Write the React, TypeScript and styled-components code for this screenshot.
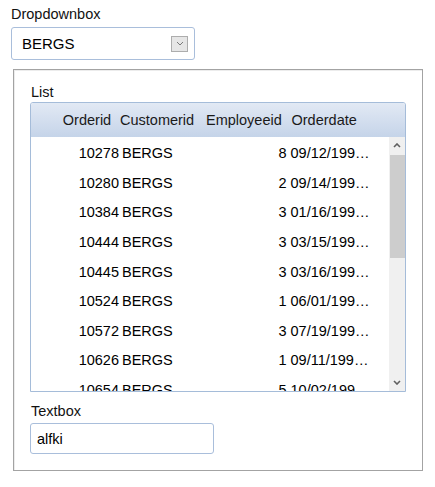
import { FC } from "react";
import styled, { createGlobalStyle } from "styled-components";

const GlobalStyle = createGlobalStyle`
  html, body {
    margin: 0;
    padding: 0;
    background: #ffffff;
  }
  body {
    font-family: "Liberation Sans", Arial, sans-serif;
    font-size: 14.5px;
    line-height: 17px;
    color: #000000;
  }
`;

interface Order {
  id: number;
  customer: string;
  employee: number;
  date: string;
}

const orders: Order[] = [
  { id: 10278, customer: "BERGS", employee: 8, date: "09/12/1996 12:00:00 AM" },
  { id: 10280, customer: "BERGS", employee: 2, date: "09/14/1996 12:00:00 AM" },
  { id: 10384, customer: "BERGS", employee: 3, date: "01/16/1997 12:00:00 AM" },
  { id: 10444, customer: "BERGS", employee: 3, date: "03/15/1997 12:00:00 AM" },
  { id: 10445, customer: "BERGS", employee: 3, date: "03/16/1997 12:00:00 AM" },
  { id: 10524, customer: "BERGS", employee: 1, date: "06/01/1997 12:00:00 AM" },
  { id: 10572, customer: "BERGS", employee: 3, date: "07/19/1997 12:00:00 AM" },
  { id: 10626, customer: "BERGS", employee: 1, date: "09/11/1997 12:00:00 AM" },
  { id: 10654, customer: "BERGS", employee: 5, date: "10/02/1997 12:00:00 AM" },
  { id: 10672, customer: "BERGS", employee: 9, date: "10/20/1997 12:00:00 AM" },
  { id: 10689, customer: "BERGS", employee: 1, date: "11/01/1997 12:00:00 AM" },
];

const Chevron: FC<{ up?: boolean; color?: string; weight?: number }> = ({
  up,
  color = "#606060",
  weight = 1.6,
}) => (
  <svg width={8} height={5} viewBox="0 0 8 5">
    <polyline
      points={up ? "1,4 4,1 7,4" : "1,1 4,4 7,1"}
      fill="none"
      stroke={color}
      strokeWidth={weight}
    />
  </svg>
);

const App: FC = () => {
  return (
    <>
      <GlobalStyle />
      <Page>
        <FieldLabel>Dropdownbox</FieldLabel>
        <Dropdown>
          <span>BERGS</span>
          <DropButton>
            <Chevron color="#7a7a7a" weight={1} />
          </DropButton>
        </Dropdown>

        <Panel>
          <FieldLabel $indent={1}>List</FieldLabel>
          <ListBox>
            <ListHeader>
              <span />
              <HeadCell $align="center">Orderid</HeadCell>
              <HeadCell $indent={1}>Customerid</HeadCell>
              <HeadCell $indent={5}>Employeeid</HeadCell>
              <HeadCell $indent={5}>Orderdate</HeadCell>
            </ListHeader>
            <ListBody>
              <Rows>
                {orders.map((o) => (
                  <Row key={o.id}>
                    <span />
                    <Cell $align="right">{o.id}</Cell>
                    <Cell $indent={3}>{o.customer}</Cell>
                    <Cell $align="right">{o.employee}</Cell>
                    <Cell $indent={4}>{o.date}</Cell>
                  </Row>
                ))}
              </Rows>
              <ScrollBar>
                <ScrollButton>
                  <Chevron up />
                </ScrollButton>
                <ScrollTrack>
                  <ScrollThumb />
                </ScrollTrack>
                <ScrollButton>
                  <Chevron />
                </ScrollButton>
              </ScrollBar>
            </ListBody>
          </ListBox>

          <FieldLabel $indent={1} $top={11}>
            Textbox
          </FieldLabel>
          <TextInput defaultValue="alfki" />
        </Panel>
      </Page>
    </>
  );
};

export default App;

const Page = styled.div`
  padding: 6px 0 0 11px;
  width: 424px;
  box-sizing: border-box;
`;

const FieldLabel = styled.div<{ $indent?: number; $top?: number }>`
  height: 17px;
  margin-left: ${(p) => p.$indent ?? 0}px;
  margin-top: ${(p) => p.$top ?? 0}px;
  margin-bottom: 4px;
  color: #111111;
`;

const Dropdown = styled.div`
  width: 184px;
  height: 33px;
  box-sizing: border-box;
  border: 1px solid #a9bedb;
  border-radius: 3px;
  display: flex;
  align-items: center;
  justify-content: space-between;
  padding: 0 6px 0 10px;
  font-size: 15px;
`;

const DropButton = styled.div`
  width: 17px;
  height: 16px;
  box-sizing: border-box;
  background: #e6e6e6;
  border: 1px solid #adadad;
  display: flex;
  align-items: center;
  justify-content: center;
`;

const Panel = styled.div`
  margin: 9px 0 0 2px;
  width: 410px;
  box-sizing: border-box;
  border: 1px solid #a3a3a3;
  box-shadow: inset 1px 1px 0 #ececec;
  padding: 14px 16px 16px 16px;

  & > ${FieldLabel}:first-child {
    margin-bottom: 1px;
  }
`;

const ListBox = styled.div`
  width: 376px;
  height: 290px;
  box-sizing: border-box;
  border: 1px solid #a5bcd9;
  border-radius: 3px 3px 0 0;
  display: flex;
  flex-direction: column;
  overflow: hidden;
`;

const columns = "24px 64px 82px 85.5px 86px";

const ListHeader = styled.div`
  height: 34px;
  flex: none;
  display: grid;
  grid-template-columns: ${columns};
  align-items: center;
  background: linear-gradient(#e2e9f4, #c5d4e9);
  color: #1a1a1a;
`;

const HeadCell = styled.span<{ $align?: string; $indent?: number }>`
  text-align: ${(p) => p.$align ?? "left"};
  padding-left: ${(p) => p.$indent ?? 0}px;
  white-space: nowrap;
`;

const ListBody = styled.div`
  flex: 1;
  display: flex;
  min-height: 0;
`;

const Rows = styled.div`
  flex: 1;
  overflow: hidden;
  padding-top: 2px;
`;

const Row = styled.div`
  height: 29.6px;
  display: grid;
  grid-template-columns: ${columns};
  align-items: center;
`;

const Cell = styled.span<{ $align?: string; $indent?: number }>`
  text-align: ${(p) => p.$align ?? "left"};
  padding-left: ${(p) => p.$indent ?? 0}px;
  white-space: nowrap;
  overflow: hidden;
  text-overflow: ellipsis;
`;

const ScrollBar = styled.div`
  width: 16px;
  flex: none;
  display: flex;
  flex-direction: column;
  background: #f0f0f0;
`;

const ScrollButton = styled.div`
  height: 17px;
  flex: none;
  display: flex;
  align-items: center;
  justify-content: center;
`;

const ScrollTrack = styled.div`
  flex: 1;
  padding-top: 1px;
`;

const ScrollThumb = styled.div`
  height: 103px;
  margin-left: 1px;
  background: #cdcdcd;
`;

const TextInput = styled.input`
  display: block;
  width: 184px;
  height: 31px;
  box-sizing: border-box;
  margin-top: -1px;
  border: 1px solid #a9bedb;
  border-radius: 3px;
  padding: 0 6px;
  font-family: "Liberation Sans", Arial, sans-serif;
  font-size: 14.5px;
  color: #000000;
  outline: none;
`;
